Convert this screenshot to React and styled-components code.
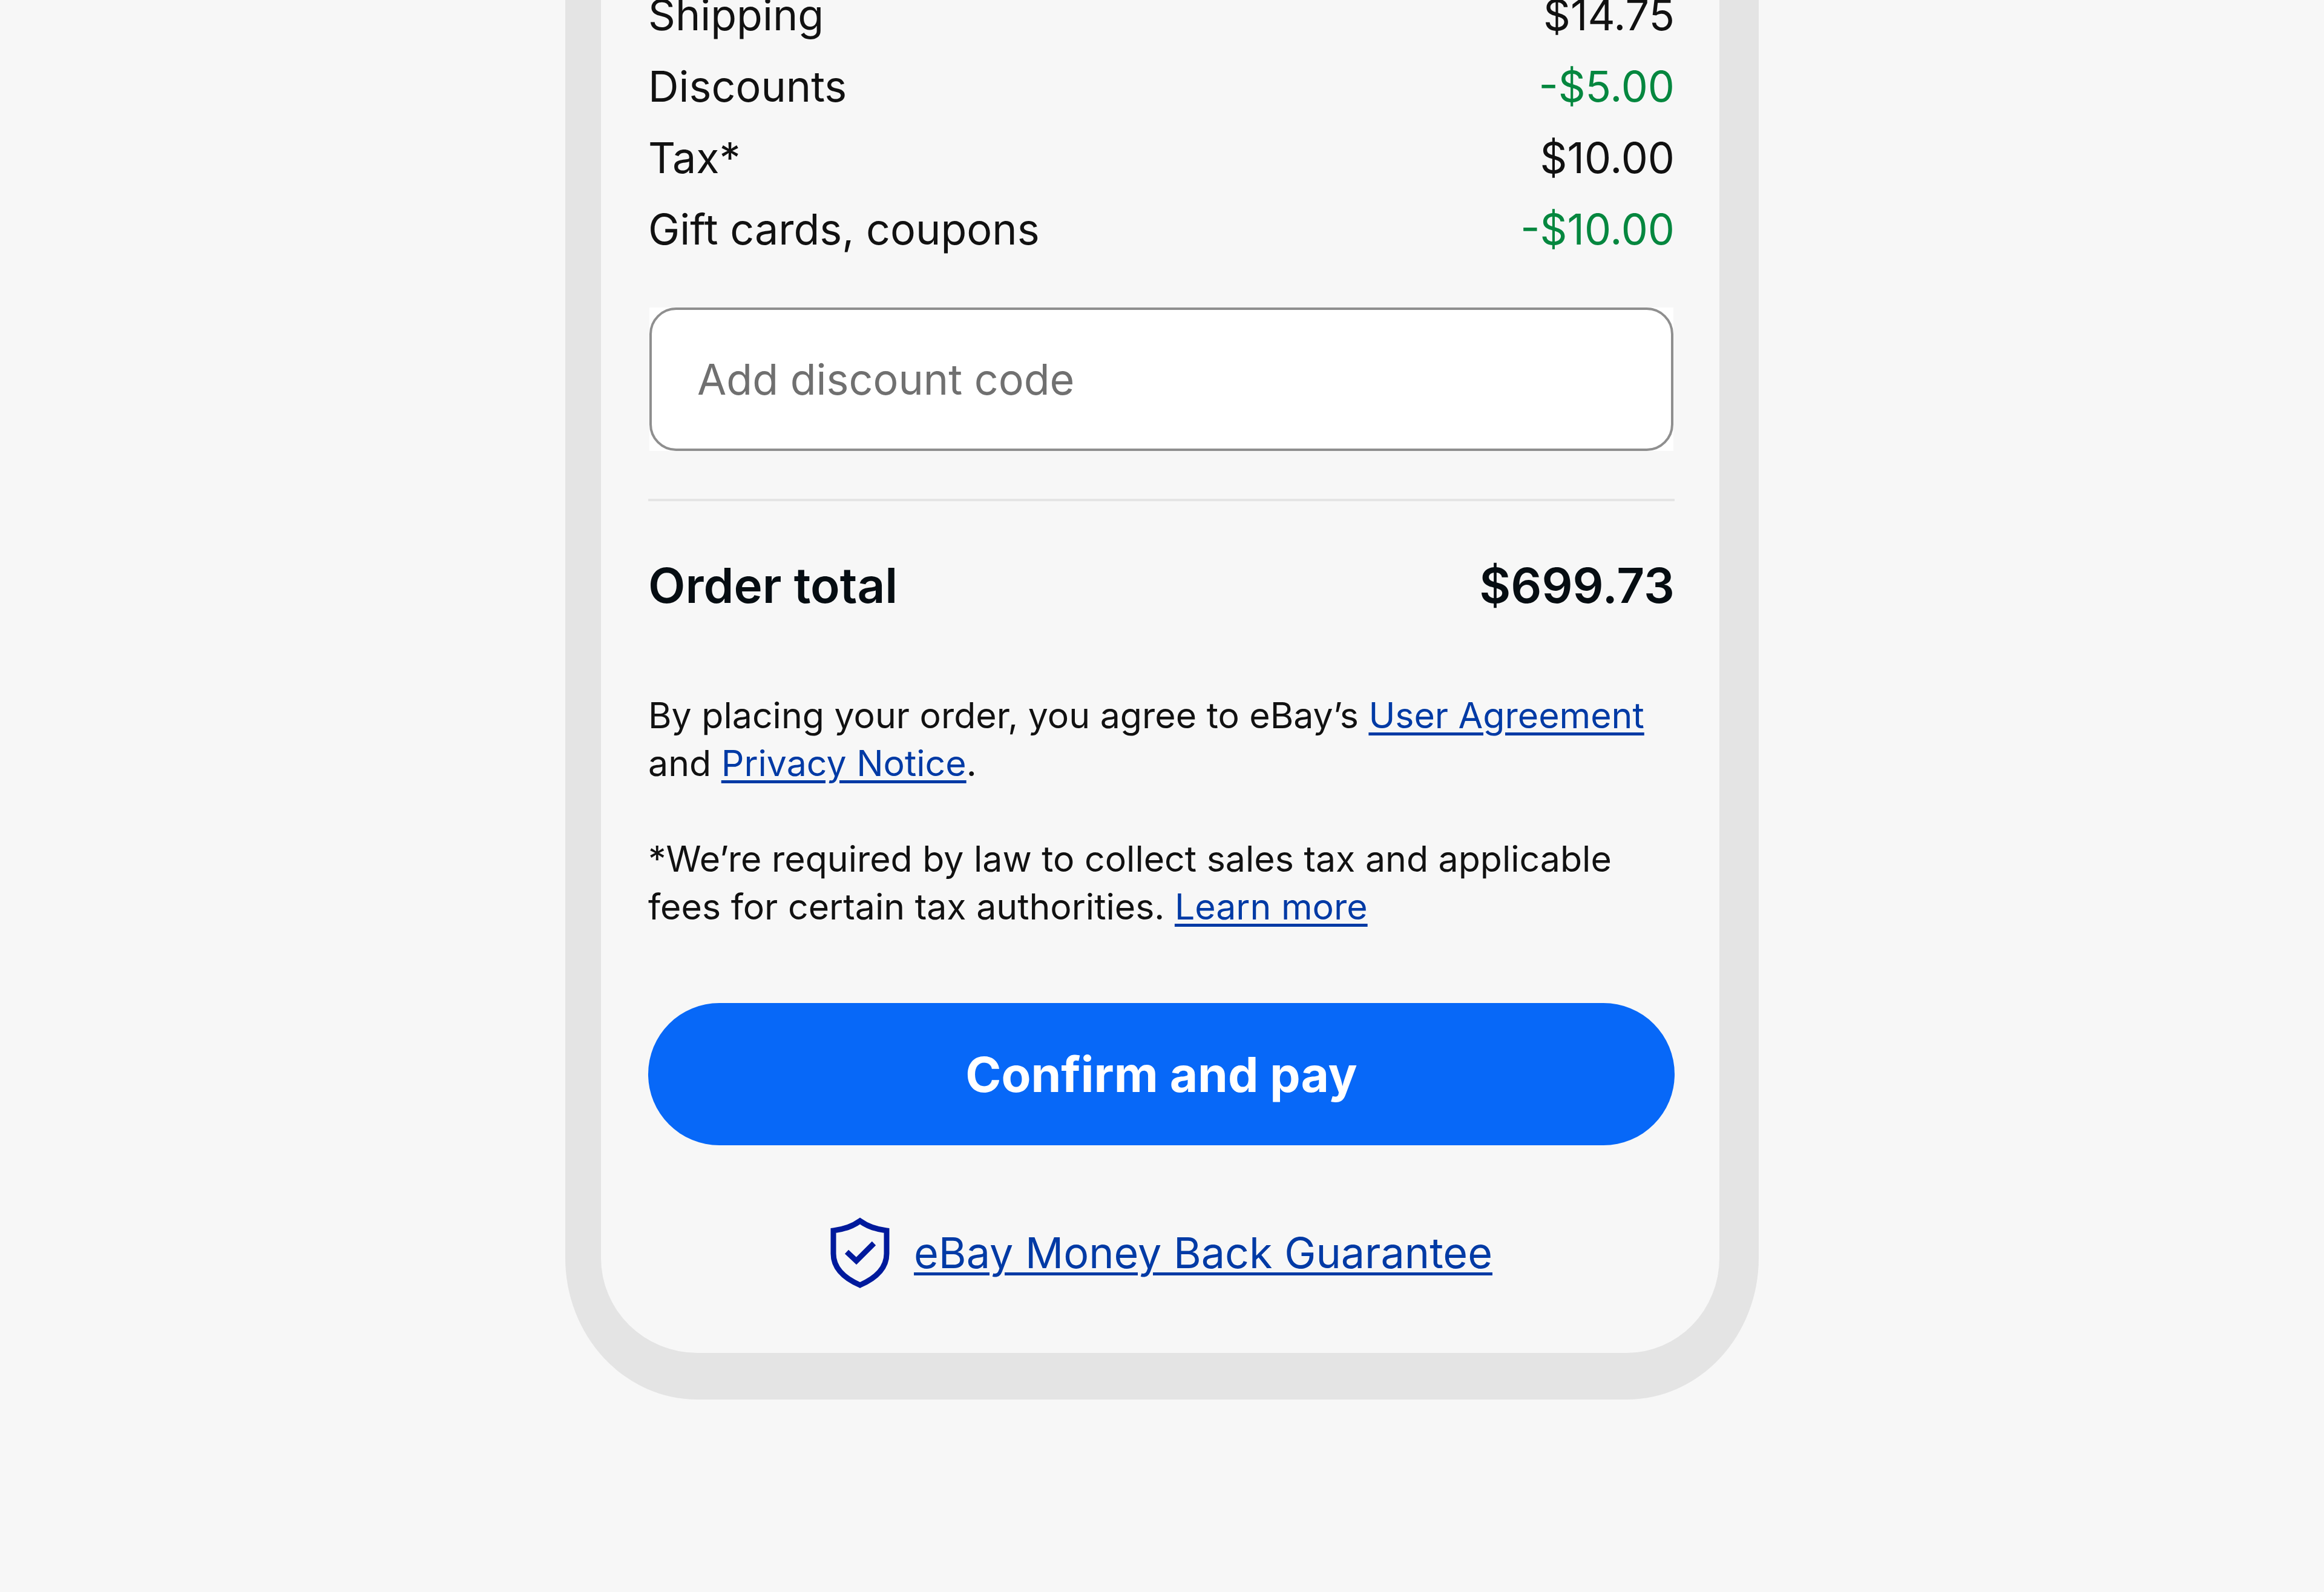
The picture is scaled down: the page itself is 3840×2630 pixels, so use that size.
import React, { useState } from 'react';
import styled, { createGlobalStyle } from 'styled-components';

const costs = [
    { label: 'Shipping', value: '$14.75' },
    { label: 'Discounts', value: '-$5.00', saving: true },
    { label: 'Tax*', value: '$10.00' },
    { label: 'Gift cards, coupons', value: '-$10.00', saving: true },
];

const ShieldIcon = () => (
    <Shield viewBox="0 0 98 118" aria-hidden="true">
        <path d="M49 6C38 14 22 20 5 22V60C5 84 24 101 49 112C74 101 93 84 93 60V22C76 20 60 14 49 6Z" />
        <path d="M27 57L43 72L72 43" />
    </Shield>
);

const App = () => {
    const [code, setCode] = useState('');

    const handleChange = (event) => setCode(event.target.value);

    const submitForm = (event) => event.preventDefault();

    return (
        <Page>
            <GlobalStyle />
            <Device>
                <Form onSubmit={submitForm}>
                    <Costs>
                        {costs.map(({ label, value, saving }) => (
                            <Row key={label}>
                                <dt>{label}</dt>
                                <Amount $saving={saving}>{value}</Amount>
                            </Row>
                        ))}
                    </Costs>

                    <Field>
                        <CodeInput
                            type="text"
                            name="code"
                            aria-label="Add discount code"
                            placeholder="Add discount code"
                            value={code}
                            onChange={handleChange}
                        />
                    </Field>

                    <Divider />

                    <Total>
                        <span>Order total</span>
                        <span>$699.73</span>
                    </Total>

                    <Legal>
                        <p>
                            By placing your order, you agree to eBay’s <Link href="#user-agreement">User Agreement</Link> and <Link href="#privacy">Privacy Notice</Link>.
                        </p>
                        <p>
                            *We’re required by law to collect sales tax and applicable fees for certain tax authorities. <Link href="#taxes">Learn more</Link>
                        </p>
                    </Legal>

                    <PayButton type="submit">Confirm and pay</PayButton>

                    <Guarantee>
                        <ShieldIcon />
                        <Link href="#guarantee">eBay Money Back Guarantee</Link>
                    </Guarantee>
                </Form>
            </Device>
        </Page>
    );
};

export default App;

const GlobalStyle = createGlobalStyle`
    * {
        box-sizing: border-box;
    }

    body {
        margin: 0;
        background: #f7f7f7;
        color: #111111;
        font-family: Inter, "Liberation Sans", Arial, sans-serif;
        font-size: 70px;
        line-height: 118px;
    }

    p, dl, dd {
        margin: 0;
    }
`;

const Page = styled.main`
    min-height: 100vh;
    overflow: hidden;
`;

const Device = styled.section`
    width: 100%;
    max-width: 1972px;
    margin: 0 auto;
    border: solid #e4e4e4;
    border-width: 0 65px 77px 59px;
    border-radius: 0 0 218px 218px / 0 0 234px 234px;
`;

/* the list is scrolled, so its first row runs under the top edge */
const Form = styled.form`
    display: flex;
    flex-direction: column;
    margin-top: -34px;
    padding: 0 74px 106px 78px;
`;

const Costs = styled.dl`
    display: flex;
    flex-direction: column;
`;

const Row = styled.div`
    display: flex;
    justify-content: space-between;
`;

const Amount = styled.dd`
    color: ${({ $saving }) => ($saving ? '#05873f' : 'inherit')};
`;

const Field = styled.div`
    display: flex;
    margin: 70px 2px 0;
    background: #ffffff;
`;

const CodeInput = styled.input`
    flex: 1;
    min-width: 0;
    height: 237px;
    padding: 0 75px;
    border: 4px solid #8f8f8f;
    border-radius: 44px;
    background: #ffffff;
    color: inherit;
    font-family: inherit;
    font-size: 70px;

    &::placeholder {
        color: #707070;
        opacity: 1;
    }
`;

const Divider = styled.hr`
    width: 100%;
    height: 4px;
    margin: 79px 0 80px;
    border: 0;
    background: #e5e5e5;
`;

const Total = styled.div`
    display: flex;
    justify-content: space-between;
    color: #060d12;
    font-size: 80px;
    font-weight: 600;
`;

const Legal = styled.div`
    display: flex;
    flex-direction: column;
    gap: 79px;
    margin-top: 116px;
    font-size: 59px;
    line-height: 79px;
`;

const Link = styled.a`
    color: #003aa5;
    text-decoration: underline;
    text-decoration-thickness: 5px;
    text-underline-offset: 7px;
`;

const PayButton = styled.button`
    height: 235px;
    margin-top: 120px;
    border: 0;
    border-radius: 118px;
    background: #0768f8;
    color: #ffffff;
    font-family: inherit;
    font-size: 80px;
    font-weight: 700;
    cursor: pointer;
`;

const Guarantee = styled.div`
    display: flex;
    align-items: center;
    justify-content: center;
    gap: 40px;
    margin-top: 119px;
`;

const Shield = styled.svg`
    width: 98px;
    height: 118px;
    fill: none;
    stroke: #001a9c;
    stroke-width: 9;
`;
